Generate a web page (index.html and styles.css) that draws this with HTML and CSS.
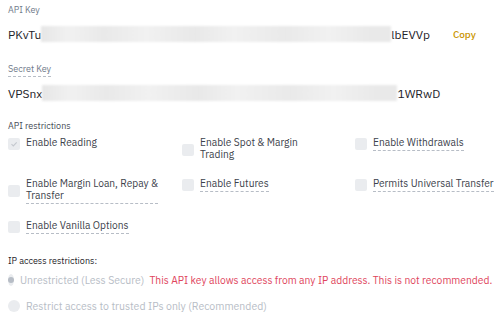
FILE: index.html
```html
<!DOCTYPE html>
<html>
<head>
<meta charset="utf-8">
<link rel="stylesheet" href="styles.css">
</head>
<body>
<div class="page">
  <div class="field-label">API Key</div>
  <div class="key-row">
    <span class="key-text">PKvTu</span><span class="blur-band b1"></span><span class="key-text">lbEVVp</span>
    <span class="copy">Copy</span>
  </div>

  <div class="field-label dashed-label"><span class="dashed">Secret Key</span></div>
  <div class="key-row second">
    <span class="key-text">VPSnx</span><span class="blur-band b2"></span><span class="key-text">1WRwD</span>
  </div>

  <div class="section-title">API restrictions</div>
  <div class="perm-grid">
    <div class="perm"><span class="box checked"><svg viewBox="0 0 12 12" width="12" height="12"><path d="M3.5 6.2l1.8 1.7 3.4-3.6" fill="none" stroke="#c4c8ce" stroke-width="1.1"/></svg></span><span class="perm-text">Enable Reading</span></div>
    <div class="perm"><span class="box"></span><span class="perm-text">Enable Spot &amp; Margin<br>Trading</span></div>
    <div class="perm"><span class="box"></span><span class="perm-text dashed">Enable Withdrawals</span></div>
    <div class="perm"><span class="box"></span><span class="perm-text dashed">Enable Margin Loan, Repay &amp;<br>Transfer</span></div>
    <div class="perm"><span class="box"></span><span class="perm-text dashed">Enable Futures</span></div>
    <div class="perm"><span class="box"></span><span class="perm-text dashed">Permits Universal Transfer</span></div>
    <div class="perm"><span class="box"></span><span class="perm-text dashed">Enable Vanilla Options</span></div>
  </div>

  <div class="ip-title">IP access restrictions:</div>
  <div class="radio-row">
    <span class="radio on"></span><span class="radio-text">Unrestricted (Less Secure)</span><span class="warn">This API key allows access from any IP address. This is not recommended.</span>
  </div>
  <div class="radio-row">
    <span class="radio"></span><span class="radio-text">Restrict access to trusted IPs only (Recommended)</span>
  </div>
</div>
</body>
</html>
```
FILE: styles.css
```css
* { box-sizing: border-box; }
html, body { margin: 0; padding: 0; background: #fff; }
body {
  font-family: "IBM Plex Sans", Roboto, "Liberation Sans", sans-serif;
  color: #1e2329;
  width: 500px;
  height: 319px;
  overflow: hidden;
}
.page { padding: 4px 8px 0 8px; }

.field-label {
  font-size: 9px;
  line-height: 12px;
  color: #707a8a;
}
.dashed-label { margin-top: 19px; }
.dashed-label .dashed { border-bottom: 1px dashed #b7bdc6; padding-bottom: 2px; }

.key-row {
  display: flex;
  align-items: center;
  height: 20px;
  margin-top: 8px;
  font-size: 12px;
}
.key-row.second { margin-top: 8px; }
.key-text { color: #1e2329; }
.blur-band {
  display: inline-block;
  height: 16px;
  background:
    linear-gradient(90deg, rgba(220,220,220,0.5) 0%, rgba(240,240,240,0) 8%, rgba(225,225,225,0.5) 18%, rgba(240,240,240,0) 30%, rgba(222,222,222,0.45) 44%, rgba(240,240,240,0) 55%, rgba(226,226,226,0.5) 70%, rgba(240,240,240,0) 82%, rgba(224,224,224,0.45) 94%),
    #f1f1f1;
  filter: blur(1px);
}
.b1 { width: 350px; }
.b2 { width: 355px; }
.copy {
  margin-left: 23px;
  color: #c99400;
  font-size: 10px;
  font-weight: 500;
}

.section-title {
  margin-top: 17px;
  font-size: 9px;
  line-height: 12px;
  color: #474d57;
}

.perm-grid {
  display: grid;
  grid-template-columns: 174px 173px 1fr;
  row-gap: 16px;
  margin-top: 5px;
  align-items: start;
}
.perm {
  display: flex;
  align-items: center;
  gap: 6px;
}
.box {
  flex: 0 0 12px;
  width: 12px;
  height: 12px;
  border-radius: 2px;
  background: #eaecef;
  display: flex;
}
.perm-text {
  font-size: 10.2px;
  line-height: 12px;
  color: #3c424b;
  white-space: nowrap;
  padding-bottom: 1px;
}
.perm-text.dashed { border-bottom: 1px dashed #b7bdc6; }

.ip-title {
  margin-top: 21px;
  font-size: 9px;
  line-height: 12px;
  color: #1e2329;
}
.radio-row {
  display: flex;
  align-items: center;
  height: 14px;
  margin-top: 6px;
  font-size: 10.5px;
  white-space: nowrap;
}
.radio-row + .radio-row { margin-top: 12px; }
.radio {
  width: 12px;
  height: 12px;
  border-radius: 50%;
  background: #eaecef;
  margin-right: 6px;
  display: flex;
  align-items: center;
  justify-content: center;
}
.radio.on::after {
  content: "";
  width: 6px;
  height: 6px;
  border-radius: 50%;
  background: #b7bdc6;
}
.radio-text { color: #b7bdc6; }
.warn { color: #e0455c; margin-left: 5px; font-size: 10.3px; }
```
